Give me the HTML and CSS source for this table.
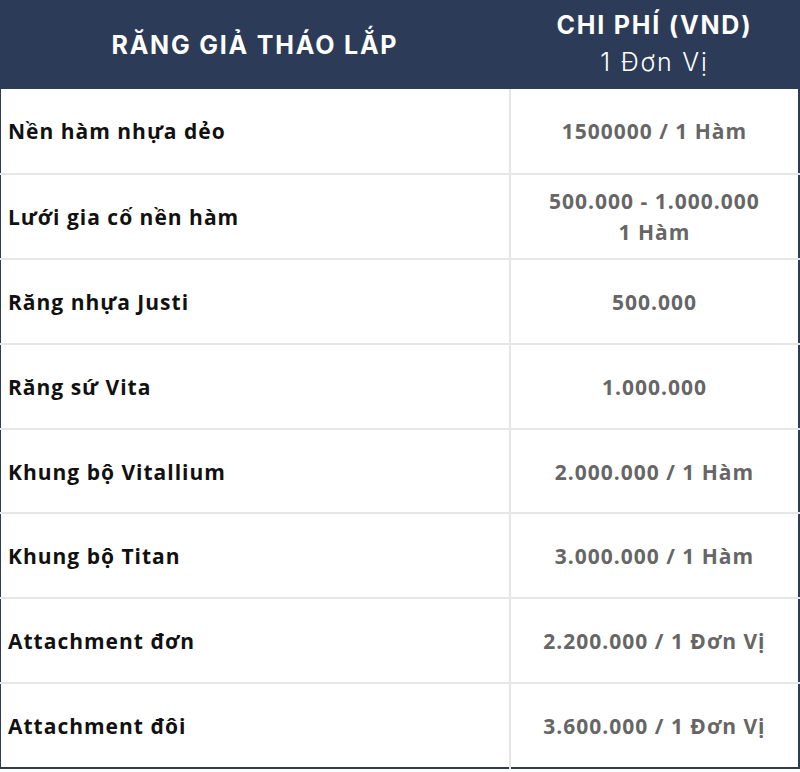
FILE: index.html
```html
<!DOCTYPE html>
<html lang="vi">
<head>
<meta charset="utf-8">
<link rel="stylesheet" href="styles.css">
</head>
<body>
<table class="price">
  <colgroup><col class="c1"><col class="c2"></colgroup>
  <thead>
    <tr>
      <th class="h1">RĂNG GIẢ THÁO LẮP</th>
      <th class="h2">CHI PHÍ (VND)<br><span class="unit">1 Đơn Vị</span></th>
    </tr>
  </thead>
  <tbody>
    <tr><td class="name">Nền hàm nhựa dẻo</td><td class="cost">1500000 / 1 Hàm</td></tr>
    <tr><td class="name">Lưới gia cố nền hàm</td><td class="cost">500.000 - 1.000.000<br>1 Hàm</td></tr>
    <tr><td class="name">Răng nhựa Justi</td><td class="cost">500.000</td></tr>
    <tr><td class="name">Răng sứ Vita</td><td class="cost">1.000.000</td></tr>
    <tr><td class="name">Khung bộ Vitallium</td><td class="cost">2.000.000 / 1 Hàm</td></tr>
    <tr><td class="name">Khung bộ Titan</td><td class="cost">3.000.000 / 1 Hàm</td></tr>
    <tr><td class="name">Attachment đơn</td><td class="cost">2.200.000 / 1 Đơn Vị</td></tr>
    <tr><td class="name">Attachment đôi</td><td class="cost">3.600.000 / 1 Đơn Vị</td></tr>
  </tbody>
</table>
</body>
</html>
```
FILE: styles.css
```css
html, body {
  margin: 0;
  padding: 0;
  background: #ffffff;
}
.price {
  width: 800px;
  border-collapse: collapse;
  table-layout: fixed;
  border-left: 1px solid #2c3b57;
  border-right: 2px solid #2c3b57;
  border-bottom: 2px solid #2c3b57;
}
.c1 { width: 509px; }
.c2 { width: 289px; }
thead tr {
  background: #2c3b57;
  height: 89px;
}
th {
  color: #ffffff;
  font-family: Inter, "Open Sans", sans-serif;
  text-align: center;
  padding: 0;
  vertical-align: middle;
}
.h1 {
  font-size: 25px;
  font-weight: 700;
  letter-spacing: 1.8px;
}
.h2 {
  font-size: 25px;
  font-weight: 700;
  line-height: 37px;
  letter-spacing: 1.8px;
  padding-bottom: 2px;
  border-left: 2px solid #2c3b57;
}
.unit {
  font-weight: 300;
}
tbody tr {
  height: 84.9px;
}
td {
  font-family: "Open Sans", sans-serif;
  font-weight: 700;
  font-size: 21px;
  letter-spacing: 1px;
  line-height: 31px;
  padding: 2px 7px 0;
  border-top: 2px solid #e6e6e6;
  vertical-align: middle;
}
tbody tr:first-child td { border-top: none; }
.name {
  color: #111111;
  text-align: left;
}
.cost {
  color: #666666;
  text-align: center;
  border-left: 2px solid #e6e6e6;
}
```
